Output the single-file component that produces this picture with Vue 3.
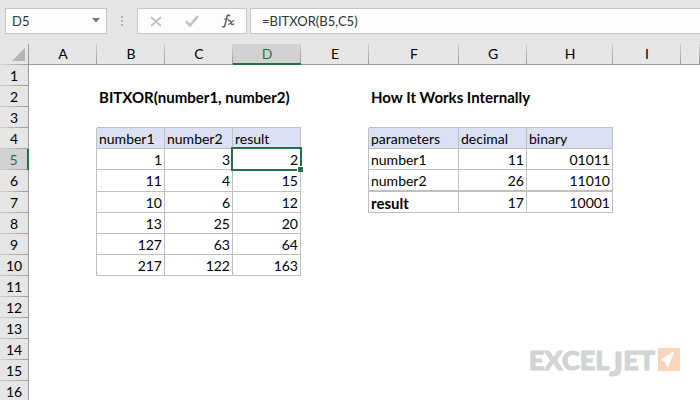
<script setup>
import { ref } from 'vue'

const formula = ref('=BITXOR(B5,C5)')
const activeCell = ref('D5')
const columns = ['A', 'B', 'C', 'D', 'E', 'F', 'G', 'H', 'I', '']
const rows = Array.from({ length: 16 }, (_, i) => i + 1)

const data = {
  B2: 'BITXOR(number1, number2)', F2: 'How It Works Internally',
  B4: 'number1', C4: 'number2', D4: 'result',
  B5: 1, C5: 3, D5: 2,
  B6: 11, C6: 4, D6: 15,
  B7: 10, C7: 6, D7: 12,
  B8: 13, C8: 25, D8: 20,
  B9: 127, C9: 63, D9: 64,
  B10: 217, C10: 122, D10: 163,
  F4: 'parameters', G4: 'decimal', H4: 'binary',
  F5: 'number1', G5: 11, H5: '01011',
  F6: 'number2', G6: 26, H6: '11010',
  F7: 'result', G7: 17, H7: '10001'
}
const bold = ['B2', 'F2', 'F7']

function inRange(r, c) {
  return (c >= 1 && c <= 3 && r >= 4 && r <= 10) || (c >= 5 && c <= 7 && r >= 4 && r <= 7)
}

function cellClass(r, c) {
  const key = columns[c] + r
  return {
    'line-right': inRange(r, c) || inRange(r, c + 1),
    'line-bottom': inRange(r, c) || inRange(r + 1, c),
    'line-double': r === 6 && c >= 5 && c <= 7,
    heading: r === 4 && inRange(r, c),
    number: /^\d+$/.test(String(data[key] ?? '')),
    bold: bold.includes(key),
    active: key === 'D5'
  }
}
</script>

<template>
  <main class="app">
    <header class="bar">
      <div class="name-box">
        <input v-model="activeCell" class="name-input" aria-label="Name box" />
        <button class="drop" aria-label="Open name list">
          <svg width="8" height="5" viewBox="0 0 8 5"><path d="M0 0h8L4 4.5z" fill="#777" /></svg>
        </button>
      </div>
      <div class="grip"><i></i><i></i><i></i></div>
      <div class="actions">
        <button aria-label="Cancel">
          <svg width="12" height="11" viewBox="0 0 12 11"><path d="M1 1l10 9M11 1L1 10" stroke="#c3c3c3" stroke-width="2" fill="none" /></svg>
        </button>
        <button aria-label="Enter">
          <svg width="14" height="12" viewBox="0 0 14 12"><path d="M1 6.500l4 4L13 1" stroke="#c3c3c3" stroke-width="2.6" fill="none" /></svg>
        </button>
        <button aria-label="Insert function">
          <svg width="13" height="14" viewBox="0 0 13 14" fill="none" stroke="#666" stroke-linecap="round">
            <path d="M7.6 1.6C6.2.4 5.2 1.4 4.8 3.2L3 11c-.4 1.8-1.2 2.4-2.3 1.7" stroke-width="1.6" />
            <path d="M2.4 5h4" stroke-width="1.2" />
            <path d="M6.5 6.6c1.6-.6 2 .2 2.5 2s1 2.5 2.6 1.6" stroke-width="1.5" />
            <path d="M12 6.7c-1.6-.3-3.8 3.7-5.6 3.6" stroke-width="1.2" />
          </svg>
        </button>
      </div>
      <input v-model="formula" class="formula" aria-label="Formula" />
    </header>

    <table class="sheet">
      <colgroup>
        <col class="w-index" /><col span="5" class="w-std" /><col class="w-f" />
        <col class="w-std" /><col class="w-h" /><col class="w-std" /><col />
      </colgroup>
      <thead>
        <tr>
          <th class="corner"><svg width="13" height="13" viewBox="0 0 13 13"><path d="M13 0v13H0z" fill="#b4b4b4" /></svg></th>
          <th v-for="c in columns" :key="c" scope="col" class="col-head" :class="{ current: c === 'D' }">{{ c }}</th>
        </tr>
      </thead>
      <tbody>
        <tr v-for="r in rows" :key="r" :class="{ tall: r === 6 }">
          <th scope="row" class="row-head" :class="{ current: r === 5 }">{{ r }}</th>
          <td v-for="(c, i) in columns" :key="c" :class="cellClass(r, i)">{{ data[c + r] }}<span v-if="c + r === 'D5'" class="selection"></span></td>
        </tr>
      </tbody>
    </table>

    <div class="brand">
      <span class="brand-name">EXCEL<span class="drop-letter">J</span>ET</span>
      <svg width="22" height="23" viewBox="0 0 22 23"><path d="M0 0h22v23H0z" fill="#fbd5bb" /><path d="M16.500 3L2.500 11.500l4.500 2.500 2.800 6z" fill="#fff" /></svg>
    </div>
  </main>
</template>

<style>
body {
  margin: 0;
}
</style>

<style scoped>
.app {
  position: relative;
  height: 100vh;
  overflow: hidden;
  background: #fff;
  color: #000;
  font: 14px/18px Lato, Carlito, sans-serif;
}
.bar {
  display: flex;
  padding: 8px 0 10px 5px;
  background: #e6e6e6;
}
.name-box,
.actions,
.formula {
  box-sizing: border-box;
  height: 26px;
  border: 1px solid #c6c6c6;
  background: #fdfdfd;
}
.name-box {
  display: flex;
  width: 102px;
}
input {
  min-width: 0;
  padding: 0;
  border: 0;
  outline: 0;
  background: none;
  color: #333;
  font: 13px/18px Lato, Carlito, sans-serif;
}
.name-input {
  flex: 1;
  padding-left: 6px;
}
button {
  display: flex;
  align-items: center;
  justify-content: center;
  padding: 0;
  border: 0;
  background: none;
}
.drop {
  width: 20px;
  padding-bottom: 2px;
}
.grip {
  display: flex;
  flex-direction: column;
  align-items: center;
  justify-content: center;
  gap: 2px;
  width: 30px;
}
.grip i {
  width: 2px;
  height: 2px;
  background: #b0b0b0;
}
.actions {
  display: flex;
  width: 110px;
  margin-right: 3px;
}
.actions button {
  flex: 1;
}
.formula {
  flex: 1;
  padding-left: 11px;
  border-right: 0;
}
.sheet {
  width: 100%;
  table-layout: fixed;
  border-collapse: separate;
  border-spacing: 0;
}
.w-index {
  width: 29px;
}
.w-std {
  width: 68px;
}
.w-f {
  width: 90px;
}
.w-h {
  width: 86px;
}
th,
td {
  box-sizing: border-box;
  height: 21px;
  padding: 2px 2px 0;
  line-height: 18px;
  vertical-align: top;
  white-space: nowrap;
}
.tall th,
.tall td {
  height: 22px;
}
th {
  background: #e6e6e6;
  font-weight: 400;
  text-align: center;
}
.corner {
  padding: 4px 4px 3px 12px;
  border-right: 1px solid #9b9b9b;
  background: #e6e6e6 linear-gradient(90deg, #d4d4d4, #9b9b9b) bottom / 100% 1px no-repeat;
}
.corner svg {
  display: block;
}
.col-head {
  padding-top: 1px;
  border-bottom: 1px solid #9b9b9b;
  background: #e6e6e6 linear-gradient(#d0d0d0, #9b9b9b) right / 1px 100% no-repeat;
}
.col-head.current {
  border-bottom: 2px solid #217346;
  background-color: #d2d2d2;
  color: #217346;
}
.row-head {
  border-right: 1px solid #9b9b9b;
  background: #e6e6e6 linear-gradient(90deg, #d0d0d0, #9b9b9b) bottom / 100% 1px no-repeat;
}
.row-head.current {
  border-right: 2px solid #217346;
  background-color: #d2d2d2;
  color: #217346;
}
.line-right {
  border-right: 1px solid #bfbfbf;
}
.line-bottom {
  border-bottom: 1px solid #bfbfbf;
}
.line-double {
  border-bottom-width: 2px;
}
.heading {
  background: #d9e1f2;
}
.number {
  text-align: right;
}
.bold {
  font-size: 15px;
  font-weight: 700;
}
.active {
  position: relative;
}
.selection {
  position: absolute;
  inset: -2px;
  border: 2px solid #217346;
}
.selection::after {
  content: '';
  position: absolute;
  right: -3px;
  bottom: -3px;
  width: 5px;
  height: 5px;
  border: solid #fff;
  border-width: 1px 0 0 1px;
  background: #217346;
}
.brand {
  position: absolute;
  right: 20px;
  bottom: 28px;
  display: flex;
  gap: 3px;
  color: #d2d4d3;
}
.brand-name {
  font: 900 27px/24px Lato, sans-serif;
  -webkit-text-stroke: 1px #d2d4d3;
}
.drop-letter {
  position: relative;
  top: 6px;
  font-size: 32px;
  line-height: 0;
}
</style>
